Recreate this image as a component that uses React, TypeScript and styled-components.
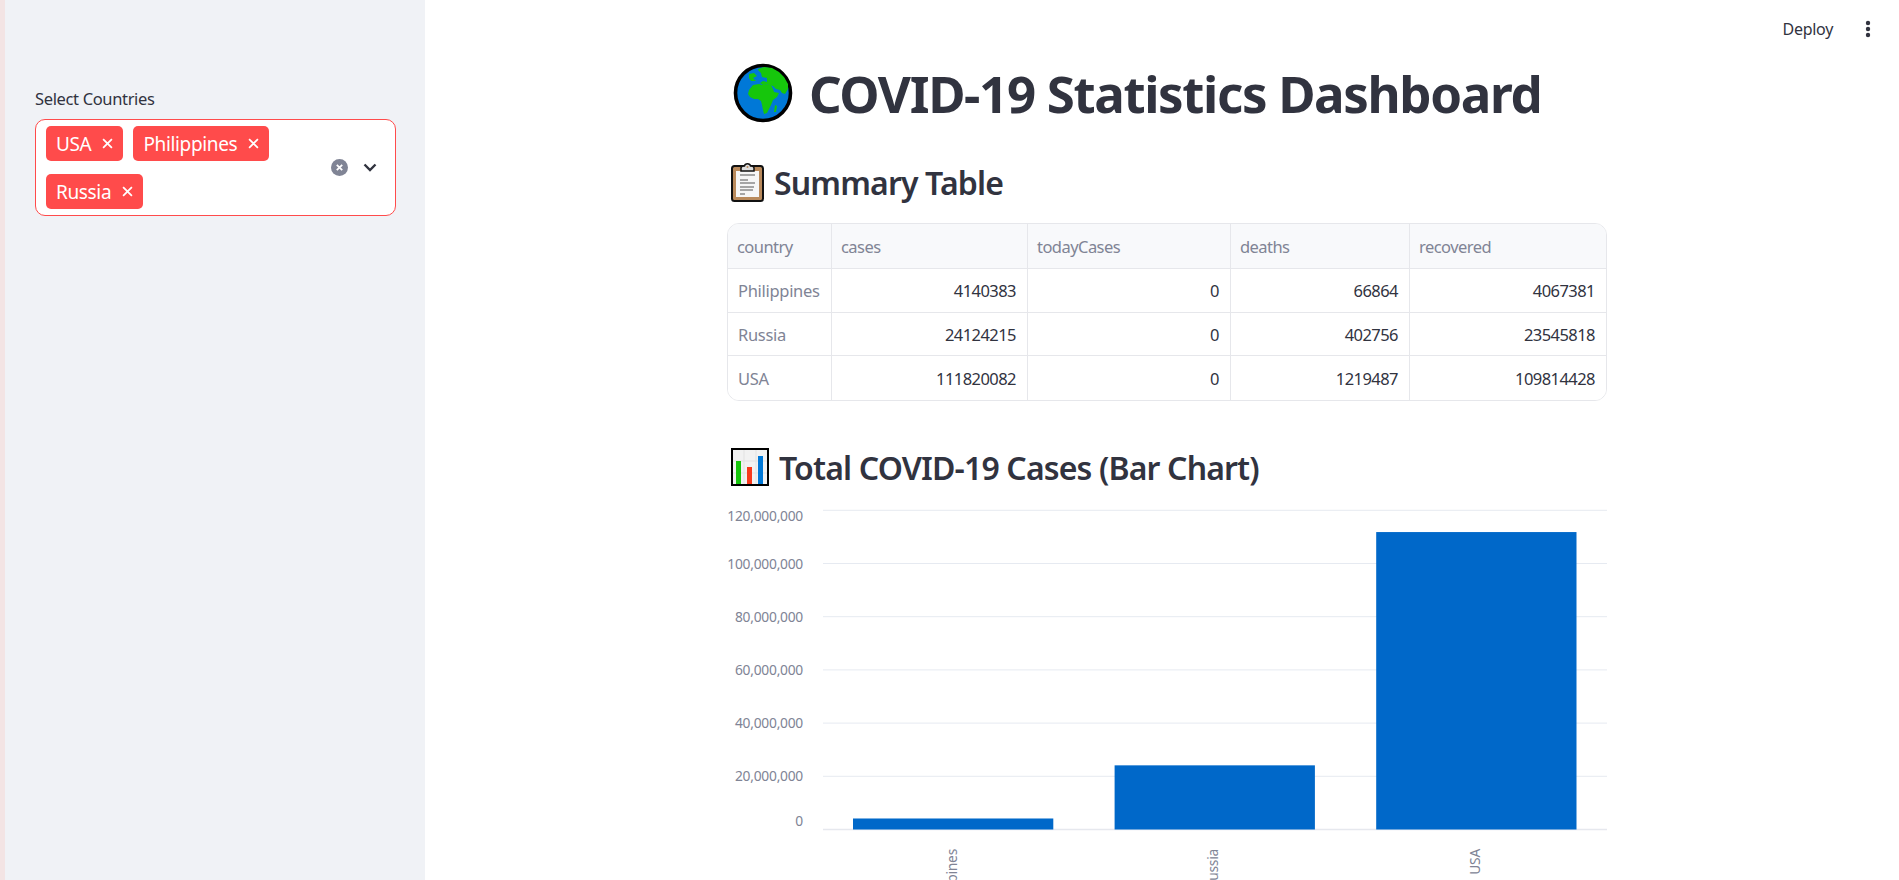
import React from 'react';
import styled, { createGlobalStyle } from 'styled-components';

const GlobalStyle = createGlobalStyle`
    html, body {
        margin: 0;
        height: 100%;
        overflow: hidden;
        background: #fff;
    }

    body {
        font-family: 'Noto Sans', 'Open Sans', sans-serif;
        color: #31333f;
    }
`;

const Page = styled.div`
    display: flex;
    width: 1899px;
    height: 880px;
    overflow: hidden;
`;

const Sidebar = styled.aside`
    flex: 0 0 425px;
    box-sizing: border-box;
    padding: 87px 29px 0 30px;
    background: #f0f2f6;
    border-left: 5px solid #f3e4e4;
`;

const FieldLabel = styled.label`
    display: block;
    margin-bottom: 8px;
    font-size: 16.5px;
    line-height: 24px;
    letter-spacing: -0.35px;
`;

const SelectBox = styled.div`
    display: flex;
    align-items: center;
    box-sizing: border-box;
    width: 361px;
    height: 97px;
    padding: 0 18px 0 10px;
    background: #fff;
    border: 1px solid #ff4b4b;
    border-radius: 10px;
`;

const TagList = styled.div`
    display: flex;
    flex: 1;
    flex-wrap: wrap;
    gap: 13px 10px;
    max-width: 270px;
    margin-right: auto;
`;

const Tag = styled.span`
    display: inline-flex;
    align-items: center;
    gap: 11px;
    height: 35px;
    padding: 0 10px;
    background: #ff4b4b;
    border-radius: 5px;
    color: #fff;
    font-size: 19px;
    letter-spacing: -0.35px;
`;

const SelectIcons = styled.div`
    display: flex;
    align-items: center;
    gap: 15px;
`;

const Main = styled.main`
    flex: 1;
    min-width: 0;
`;

const Toolbar = styled.header`
    display: flex;
    align-items: center;
    justify-content: flex-end;
    gap: 32px;
    height: 58px;
    padding-right: 28px;
`;

const DeployButton = styled.span`
    font-size: 16px;
    letter-spacing: -0.3px;
`;

const Content = styled.div`
    width: 880px;
    margin-left: 302px;
`;

const Title = styled.h1`
    display: flex;
    align-items: center;
    gap: 16px;
    height: 70px;
    margin: 0 0 32px 6px;
    font-size: 51px;
    font-weight: 700;
    letter-spacing: -1.35px;
    white-space: nowrap;
`;

const SectionTitle = styled.h2<{ $gap: number; $bottom: number }>`
    display: flex;
    align-items: center;
    gap: ${({ $gap }) => $gap}px;
    height: 44px;
    margin: 0 0 ${({ $bottom }) => $bottom}px 4px;
    font-size: 32px;
    font-weight: 600;
    letter-spacing: -0.85px;
    white-space: nowrap;
`;

const Table = styled.div`
    display: grid;
    grid-template-columns: 104px 196px 203px 179px 1fr;
    grid-template-rows: 45px 44px 43px 44px;
    box-sizing: border-box;
    height: 178px;
    margin-bottom: 44px;
    overflow: hidden;
    border: 1px solid #e6e7eb;
    border-radius: 12px;
`;

const cellPadding = { head: '0 9px', index: '0 10px', value: '0 11px 0 10px' };
const cellSpacing = { head: '-0.55px', index: '-0.3px', value: '-0.55px' };

const Cell = styled.div<{ $kind: 'head' | 'index' | 'value' }>`
    display: flex;
    align-items: center;
    justify-content: ${({ $kind }) => ($kind === 'value' ? 'flex-end' : 'flex-start')};
    box-sizing: border-box;
    padding: ${({ $kind }) => cellPadding[$kind]};
    background: ${({ $kind }) => ($kind === 'head' ? '#f8f9fb' : '#fff')};
    border-right: 1px solid #e6e7eb;
    border-bottom: 1px solid #e6e7eb;
    color: ${({ $kind }) => ($kind === 'value' ? '#31333f' : '#808495')};
    font-size: 16.5px;
    letter-spacing: ${({ $kind }) => cellSpacing[$kind]};

    &:nth-child(5n) {
        border-right: 0;
    }

    &:nth-last-child(-n + 5) {
        border-bottom: 0;
    }
`;

const Chart = styled.svg`
    display: block;
    font-family: 'Noto Sans', 'Open Sans', sans-serif;
`;

const AxisLabel = styled.text`
    fill: #808495;
    font-size: 13.8px;
    letter-spacing: -0.25px;
`;

const columns = ['country', 'cases', 'todayCases', 'deaths', 'recovered'];

const rows = [
    ['Philippines', 4140383, 0, 66864, 4067381],
    ['Russia', 24124215, 0, 402756, 23545818],
    ['USA', 111820082, 0, 1219487, 109814428],
] as const;

// plot coordinates relative to the chart's top left corner
const ZERO_Y = 329.5;
const PX_PER_MILLION = 2.66;

const ticks = [
    { value: 120, labelY: 17 },
    { value: 100, labelY: 65 },
    { value: 80, labelY: 118 },
    { value: 60, labelY: 171 },
    { value: 40, labelY: 224 },
    { value: 20, labelY: 277 },
    { value: 0, labelY: 322 },
];

const bars = [
    { name: 'Philippines', x: 126, cases: 4.14 },
    { name: 'Russia', x: 387.6, cases: 24.12 },
    { name: 'USA', x: 649.2, cases: 111.82 },
];

const GlobeEmoji = () => (
    <svg width="60" height="60" viewBox="-30 -30 60 60" aria-hidden>
        <circle r="27.5" fill="#0078d7" stroke="#000" strokeWidth="3.6" />
        <path
            fill="#16c60c"
            d="M-10-8l6-1 3 1 3-1 6 1 2 4 1 3 5 1-2 4-4 3-2 5-2 4-2 4-3 1-1-4-1-5-1-4-3-2-4 0-4-2-2-3 1-4z"
        />
        <path
            fill="#16c60c"
            d="M-5-24l6-2 8 1 7 4 5 5 4 7 0 5-3 5-3-1-2-3-4-1-3-3-4-1-3-1-3 1-3-2 3-2 4 1 0-4-5-1-1-4-3-3z"
        />
        <path fill="#16c60c" d="M-14-19l5-1 3 3-4 2 3 3-5 0-2-3z" />
        <path fill="#16c60c" d="M12 12l2 1-1 6-2 0z" />
    </svg>
);

const ClipboardEmoji = () => (
    <svg width="33" height="40" viewBox="0 0 33 40" aria-hidden>
        <rect x="1" y="4" width="31" height="35" rx="2.5" fill="#b98a5c" stroke="#111" strokeWidth="2" />
        <rect x="5" y="9" width="23" height="26" fill="#f6f6f6" />
        <path d="M10 6c0-2 3-2 3.500-2 .5-3 5.500-3 6 0 .5 0 3.500 0 3.500 2v3H10z" fill="#ddd" stroke="#111" strokeWidth="1.500" />
        <circle cx="16.500" cy="5" r="1" fill="#b98a5c" />
        <path d="M9 13h15M9 18h8M9 21h15M9 25h14M9 28h13M9 32h5" stroke="#555" strokeWidth="1.200" />
    </svg>
);

const BarsEmoji = () => (
    <svg width="38" height="38" viewBox="0 0 38 38" aria-hidden>
        <rect x="1" y="1" width="36" height="36" fill="#f2f2f2" stroke="#000" strokeWidth="2" />
        <path d="M13 2v34M25 2v34M2 13h34M2 25h34" stroke="#e2e2e2" strokeWidth="1" />
        <rect x="5" y="13" width="5" height="23" fill="#16c60c" />
        <rect x="16" y="19" width="5" height="17" fill="#f7391c" />
        <rect x="27" y="8" width="5" height="28" fill="#0078d7" />
    </svg>
);

const TagClose = () => (
    <svg width="11" height="11" viewBox="0 0 10 10" aria-hidden>
        <path d="M1 1l8 8M9 1l-8 8" stroke="#fff" strokeWidth="1.600" />
    </svg>
);

const ClearIcon = () => (
    <svg width="17" height="17" viewBox="0 0 17 17" aria-hidden>
        <circle cx="8.500" cy="8.500" r="8.500" fill="#808495" />
        <path d="M5.800 5.800l5.400 5.400M11.200 5.800l-5.400 5.400" stroke="#fff" strokeWidth="1.800" />
    </svg>
);

const ChevronIcon = () => (
    <svg width="14" height="9" viewBox="0 0 14 9" aria-hidden>
        <path d="M1.500 1.500L7 7l5.500-5.500" fill="none" stroke="#31333f" strokeWidth="2.400" />
    </svg>
);

const KebabIcon = () => (
    <svg width="6" height="18" viewBox="0 0 6 18" aria-hidden>
        <circle cx="3" cy="3" r="2.200" fill="#31333f" />
        <circle cx="3" cy="9" r="2.200" fill="#31333f" />
        <circle cx="3" cy="15" r="2.200" fill="#31333f" />
    </svg>
);

const cellKind = (rowValue: string | number) => (typeof rowValue === 'string' ? 'index' : 'value');

const App = () => (
    <Page>
        <GlobalStyle />
        <Sidebar>
            <FieldLabel>Select Countries</FieldLabel>
            <SelectBox>
                <TagList>
                    {['USA', 'Philippines', 'Russia'].map(country => (
                        <Tag key={country}>
                            {country}
                            <TagClose />
                        </Tag>
                    ))}
                </TagList>
                <SelectIcons>
                    <ClearIcon />
                    <ChevronIcon />
                </SelectIcons>
            </SelectBox>
        </Sidebar>
        <Main>
            <Toolbar>
                <DeployButton>Deploy</DeployButton>
                <KebabIcon />
            </Toolbar>
            <Content>
                <Title>
                    <GlobeEmoji />
                    COVID-19 Statistics Dashboard
                </Title>
                <SectionTitle $gap={10} $bottom={19}>
                    <ClipboardEmoji />
                    Summary Table
                </SectionTitle>
                <Table>
                    {columns.map(column => (
                        <Cell key={column} $kind="head">
                            {column}
                        </Cell>
                    ))}
                    {rows.map(row =>
                        row.map((value, i) => (
                            <Cell key={`${row[0]}-${i}`} $kind={cellKind(value)}>
                                {value}
                            </Cell>
                        )),
                    )}
                </Table>
                <SectionTitle $gap={10} $bottom={11}>
                    <BarsEmoji />
                    Total COVID-19 Cases (Bar Chart)
                </SectionTitle>
                <Chart width="880" height="380" viewBox="0 0 880 380">
                    {ticks.map(({ value, labelY }) => (
                        <g key={value}>
                            <line
                                x1="96"
                                x2="880"
                                y1={ZERO_Y - value * PX_PER_MILLION}
                                y2={ZERO_Y - value * PX_PER_MILLION}
                                stroke={value === 0 ? '#e6e8ee' : '#e6eaf1'}
                                strokeWidth={value === 0 ? 1.500 : 1}
                            />
                            <AxisLabel x="76" y={labelY} textAnchor="end" dominantBaseline="middle">
                                {value === 0 ? '0' : `${value},000,000`}
                            </AxisLabel>
                        </g>
                    ))}
                    {bars.map(({ name, x, cases }) => (
                        <g key={name}>
                            <rect
                                x={x}
                                y={ZERO_Y - cases * PX_PER_MILLION}
                                width="200.300"
                                height={cases * PX_PER_MILLION}
                                fill="#0068c9"
                            />
                            <AxisLabel
                                textAnchor="end"
                                dominantBaseline="middle"
                                transform={`translate(${x + 100} 349) rotate(-90)`}
                            >
                                {name}
                            </AxisLabel>
                        </g>
                    ))}
                </Chart>
            </Content>
        </Main>
    </Page>
);

export default App;
